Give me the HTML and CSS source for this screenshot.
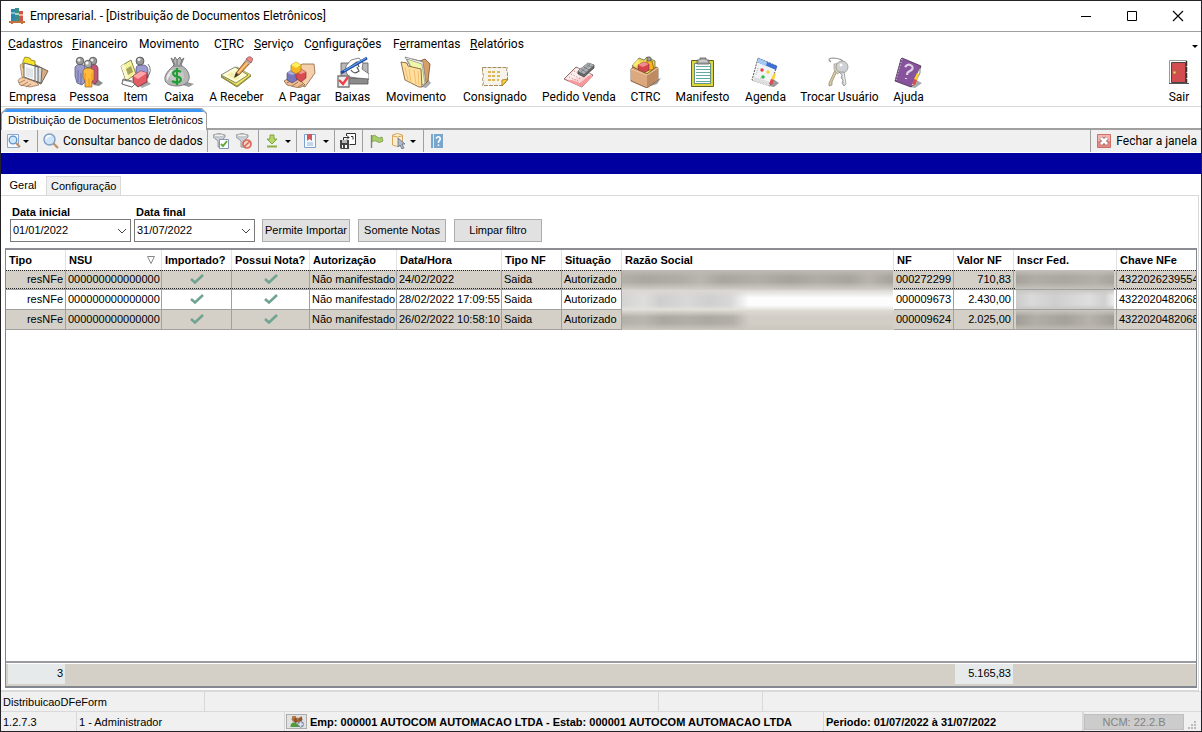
FILE: index.html
```html
<!DOCTYPE html>
<html lang="pt-BR">
<head>
<meta charset="utf-8">
<title>Empresarial</title>
<link rel="stylesheet" href="styles.css">
</head>
<body>
<div class="window">
  <header class="titlebar">
    <svg class="app-icon" viewBox="0 0 16 16"><rect x="2" y="1" width="4" height="12" fill="#2f86ad"/><rect x="2" y="4" width="4" height="2" fill="#7fc0cf"/><rect x="6" y="0" width="4" height="13" fill="#3b8f86"/><rect x="6" y="5" width="4" height="2" fill="#a9d6bd"/><rect x="10" y="3" width="4" height="10" fill="#d2554a"/><rect x="10" y="6" width="4" height="2" fill="#efb09a"/><path d="M0 13h16v2h-2v1h-2v-1H4v1H2v-1H0z" fill="#c4713c"/></svg>
    <h1>Empresarial. - [Distribuição de Documentos Eletrônicos]</h1>
    <div class="caption-buttons">
      <button type="button" aria-label="Minimizar"><svg viewBox="0 0 12 12"><path d="M1 6.500h10" stroke="#000"/></svg></button>
      <button type="button" aria-label="Maximizar"><svg viewBox="0 0 12 12"><path d="M1.500 1.500h9v9h-9z" fill="none" stroke="#000"/></svg></button>
      <button type="button" aria-label="Fechar"><svg viewBox="0 0 12 12"><path d="M1 1l10 10M11 1L1 11" stroke="#000" stroke-width="1.100"/></svg></button>
    </div>
  </header>

  <nav class="menubar">
    <a href="#"><u>C</u>adastros</a><a href="#"><u>F</u>inanceiro</a><a href="#">Movimento</a><a href="#">C<u>T</u>RC</a><a href="#"><u>S</u>erviço</a><a href="#">C<u>o</u>nfigurações</a><a href="#">F<u>e</u>rramentas</a><a href="#"><u>R</u>elatórios</a>
    <i class="caret"></i>
  </nav>

  <div class="launcher">
    <div class="launcher-items">
      <button type="button"><svg viewBox="0 0 32 32"><path d="M15 7l16 8-7 13-8-3z" fill="#d9ad80" stroke="#5b4737" stroke-width=".8"/><path d="M3 9l3-2 3 2v14l-4-2z" fill="#f3c99d" stroke="#8b694d" stroke-width=".6"/><path d="M6 5l2-4 5 1 1 2 4 1v8L6 12z" fill="#f6e22c" stroke="#8a7d13" stroke-width=".8"/><path d="M14 9l11 3-1 15-9-3z" fill="#d7dde2" stroke="#555" stroke-width=".8"/><path d="M10 8l11 3v15l-10-3z" fill="#eef1f3" stroke="#444" stroke-width=".8"/><path d="M7 7l11 3v15L7 21z" fill="#fafafa" stroke="#4b4b4b" stroke-width=".8"/><path d="M9 11l7 2v9l-7-2z" fill="#dfe5e8"/><path d="M1 25c1-3 4-4 7-3l11 4 3 3-9 2-10-2z" fill="#f6cda8" stroke="#8b694d" stroke-width=".7"/><path d="M2 27l6-3M4 30l7-4M9 31l5-3" stroke="#9a6f51" stroke-width=".8"/></svg><span>Empresa</span></button>
      <button type="button"><svg viewBox="0 0 32 32"><path d="M20 29l4-6 6 4-4 3z" fill="#8d8d8d"/><path d="M18 10q5-4 7 2v12l-3 4-5-2z" fill="#c2557c" stroke="#633" stroke-width=".7"/><path d="M2 11q4-5 10-1v16l-3 3-5-2-2-7z" fill="#9b9ccc" stroke="#4a4a6e" stroke-width=".7"/><path d="M5 14v12M8 17v11" stroke="#6c6da6"/><circle cx="7" cy="5" r="3.800" fill="#999" stroke="#444" stroke-width=".7"/><circle cx="20" cy="5" r="3.800" fill="#999" stroke="#444" stroke-width=".7"/><path d="M10 14q5-4 11 0v10l-2 1v6h-7v-7l-2-2z" fill="#ffb93c" stroke="#8b5c16" stroke-width=".7"/><path d="M16 22v9M12 17v7M19 17v7" stroke="#e88b0d" stroke-width=".8"/><circle cx="15" cy="8" r="3.800" fill="#aaa" stroke="#444" stroke-width=".7"/><circle cx="6" cy="4" r="1.500" fill="#eee"/><circle cx="14" cy="7" r="1.500" fill="#fff"/><circle cx="19" cy="4" r="1.500" fill="#eee"/></svg><span>Pessoa</span></button>
      <button type="button"><svg viewBox="0 0 32 32"><path d="M19 29l8-4 4 3-9 4z" fill="#aaa"/><path d="M16 13q0-5 7-4 5 0 5 6v7l-12 1z" fill="#9b9bd0" stroke="#45456d" stroke-width=".7"/><circle cx="20" cy="5" r="4" fill="#999" stroke="#444" stroke-width=".7"/><circle cx="19" cy="3.500" r="1.500" fill="#eee"/><path d="M1 10L11 4l5 14-10 7z" fill="#f4f19b" stroke="#6e6e28" stroke-width=".8"/><path d="M1 10l3-2 5 14-3 2z" fill="#fbf8cf"/><path d="M6 13l5-3 2 6-5 3z" fill="#a7a45b"/><path d="M13 20l8-5 6 2v9l-9 5-5-4z" fill="#e35c66" stroke="#6b3035" stroke-width=".8"/><path d="M13 20l8-5 6 2-9 6z" fill="#ffa5a8"/><path d="M28 8q5 6-1 14M3 23l-1 5 10 3 3-4M3 23l9 2" fill="none" stroke="#555" stroke-width=".8"/><path d="M3 24l9 2 3 2-3 3-10-3z" fill="#fff" stroke="#555" stroke-width=".7"/></svg><span>Item</span></button>
      <button type="button"><svg viewBox="0 0 32 32"><path d="M20 29l4-3 7 2-5 3z" fill="#999"/><path d="M11 9L8 2l3 2 1-3 2 3 3-3 1 3 3-2-3 7 5 4c7 9 2 17-9 17-13 0-16-8-7-17z" fill="#b7b7b7" stroke="#666" stroke-width=".8"/><path d="M12 9l-2-5M14 9V4m3 5l2-5M10 10h9" stroke="#666" fill="none" stroke-width=".8"/><path d="M8 14q-6 6-4 11 4-9 9-11z" fill="#ececec"/><circle cx="14" cy="20" r="7" fill="#c8c8c8"/><path d="M18 16q-3-2-6-1-4 2 0 5l4 1q4 3 0 5-4 1-7-1M14 12v17" stroke="#229e35" stroke-width="2.200" fill="none"/></svg><span>Caixa</span></button>
      <button type="button"><svg viewBox="0 0 32 32"><path d="M0 21l15-9 15 8-14 11z" fill="#c2bc26" stroke="#66651b" stroke-width=".7"/><path d="M0 20l16-9 14 8-14 11z" fill="#f0ec58" stroke="#666" stroke-width=".6"/><path d="M0 19l14-8 13 8-12 8z" fill="#fffed2" stroke="#555" stroke-width=".7"/><path d="M6 19l5-3 8 5-4 3z" fill="#f4efac"/><path d="M13 22l2-6 3 3z" fill="#333"/><path d="M15 17L26 3l4 3-12 13z" fill="#e99a44" stroke="#6b4530" stroke-width=".8"/><path d="M17 17L28 5" stroke="#ffcc80" stroke-width="1.500"/><path d="M26 2q3-3 6 1l-2 4-5-4z" fill="#ef8585" stroke="#855" stroke-width=".7"/><path d="M24 4l5 4" stroke="#a8afb8" stroke-width="1.600"/></svg><span>A Receber</span></button>
      <button type="button"><svg viewBox="0 0 32 32"><path d="M8 17L18 8l12 0 1 9-10 14-6-3z" fill="#f5cfa9" stroke="#8b6546" stroke-width=".8"/><path d="M0 25l7-4 10 4 4 4-6 3-12-3z" fill="#efbd91" stroke="#7d5637" stroke-width=".7"/><path d="M3 27l5-3m0 6l6-4m0 5l5-3" stroke="#8d603e" stroke-width=".8"/><path d="M3 17l5-3 5 3v7l-5 3-5-3z" fill="#7776bd" stroke="#414174" stroke-width=".6"/><path d="M3 17l5 2 5-2-5-3z" fill="#aaaadf"/><path d="M12 16l5-3 5 3v6l-5 4-5-4z" fill="#d94b50" stroke="#752b2f" stroke-width=".6"/><path d="M12 16l5 2 5-2-5-3z" fill="#f49793"/><path d="M7 9l5-3 5 3v6l-5 3-5-3z" fill="#f6b71e" stroke="#8d6920" stroke-width=".6"/><path d="M7 9l5 3 5-3-5-3z" fill="#ffef5f"/></svg><span>A Pagar</span></button>
      <button type="button"><svg viewBox="0 0 32 32"><path d="M4 7h27v17H4z" fill="#b9b9b9" stroke="#555" stroke-width=".8"/><path d="M9 22h22v6H9z" fill="#8b8b8b" stroke="#555" stroke-width=".8"/><path d="M9 10l5-6 8-2 4 5-1 6 7 5v5l-12-1-7-1q-5-3-4-11z" fill="#fff" stroke="#555" stroke-width=".7"/><path d="M13 11l7-5 2 5m-8 3q3 5 8 1l-2-4" fill="none" stroke="#555" stroke-width="1.200"/><path d="M4 17L30 2" stroke="#22479d" stroke-width="2.600"/><path d="M7 15L29 2" stroke="#56a2f2" stroke-width="1.200"/><path d="M1 20h11v11H1z" fill="#eee" stroke="#777" stroke-width="1.400"/><path d="M2 24l4 4 5-7" stroke="#ee3e42" stroke-width="2.400" fill="none"/></svg><span>Baixas</span></button>
      <button type="button"><svg viewBox="0 0 32 32"><path d="M22 31l5-9 4 5-5 5z" fill="#aaa"/><path d="M12 3l8 2 5-2 5 5-2 17-6 6z" fill="#d79e67" stroke="#6f4d2c" stroke-width=".8"/><path d="M5 1l18 5 3 21-4 4z" fill="#fff" stroke="#777" stroke-width=".8"/><path d="M7 3l15 5 3 20-5 1z" fill="#eff7a8" stroke="#777" stroke-width=".6"/><path d="M1 6l6 1 1 3 13 3 1 18-3 0-14-7z" fill="#ffdf9d" stroke="#75512b" stroke-width=".8"/><path d="M5 11l3 13M9 13l2 14M14 14l2 14M18 15l1 14" stroke="#f2bd71"/></svg><span>Movimento</span></button>
      <button type="button"><svg viewBox="0 0 32 32"><path d="M3.500 11.500h25l-1 2 1 3v8l-5 5h-20l1-3-1-3 1-4-1-3z" fill="#f6f3ea" stroke="#a58c5a" stroke-dasharray="4 1"/><path d="M9 16h3m1 0h3m2 0h3M9 20h3m1 0h3m2 0h3M9 24h3m1 0h3m2 0h2" stroke="#d5a327" stroke-width="1.600"/><path d="M29 23l-6 7v-6z" fill="#ffd33e" stroke="#9c731d" stroke-width=".8"/></svg><span>Consignado</span></button>
      <button type="button"><svg viewBox="0 0 32 32"><path d="M1 23l12-12 17 8-11 12z" fill="#fbd9da" stroke="#6c4d4d" stroke-width=".8"/><path d="M4 25l21-6 5 1-11 11z" fill="#f6999d"/><path d="M3 22l11-10 14 6-11 9z" fill="#fff" opacity=".55"/><path d="M8 18l10 5m-7-8l10 5m-15 1l9 4" stroke="#bd7777" stroke-dasharray="1 2"/><path d="M15 15L25 7l6 2v3l-10 9-6-3z" fill="#666" stroke="#444" stroke-width=".7"/><path d="M15 15L25 7l6 2-10 9z" fill="#aeb2b7"/><path d="M18 13l5 3m-2-5l5 3m-2-5l5 2M18 16l9-8" stroke="#777" stroke-width=".8"/></svg><span>Pedido Venda</span></button>
      <button type="button"><svg viewBox="0 0 32 32"><path d="M17 31l7-6 7-3-4 6z" fill="#999"/><path d="M2 10l7-8 5 2 3-3 8 4v10L15 19z" fill="#e6d750" stroke="#555" stroke-width=".7"/><path d="M3 9l5-6 6 11z" fill="#ffe96b"/><path d="M17 4l5 1 2 9h-7z" fill="#ffb51e" stroke="#77541f" stroke-width=".7"/><circle cx="19" cy="3" r="2.200" fill="#999" stroke="#444" stroke-width=".6"/><path d="M8 9l6-3 5 2v6l-5 3-6-3z" fill="#d5434c" stroke="#733" stroke-width=".6"/><path d="M8 9l5 2 6-3-5-2z" fill="#f38b8c"/><path d="M1 13l2-2 14 7 9-7 2 1v12l-11 8-16-7z" fill="#d69c6d" stroke="#704f35" stroke-width=".8"/><path d="M1 13l16 6v12L1 24z" fill="#dca97e"/><path d="M17 19l11-7v12l-11 7z" fill="#bd8a62"/><path d="M1 13l16 6 11-7" stroke="#f8d5ac" fill="none" stroke-width=".8"/></svg><span>CTRC</span></button>
      <button type="button"><svg viewBox="0 0 32 32"><path d="M4.500 4.500h22v26h-22z" fill="#dcd63f" stroke="#646421"/><path d="M7.500 7.500h16v20h-16z" fill="#fff" stroke="#4b7a78" stroke-width=".8"/><path d="M9 10.500h14M9 13.500h14M9 16.500h14M9 19.500h14M9 22.500h14M9 25.500h14" stroke="#61aaa8"/><path d="M10 4h3V2h6v2h3v4H10z" fill="#a9a9a9" stroke="#555" stroke-width=".8"/><path d="M12 5h8" stroke="#e8e8e8"/></svg><span>Manifesto</span></button>
      <button type="button"><svg viewBox="0 0 32 32"><path d="M19 30l4-7 6 4-5 4z" fill="#999"/><path d="M8 2l19 8-7 20L2 24z" fill="#f2f3f5" stroke="#4c4c4c" stroke-dasharray="2 1" stroke-width=".9"/><path d="M8 2l19 8-1 4L7 6z" fill="#3e6fd4"/><path d="M8 2l9 4-1 4-9-4z" fill="#a5cbf3"/><path d="M4 21l16 5-1 4-15-5z" fill="#dedede"/><circle cx="12" cy="14" r="1.700" fill="#e93945"/><circle cx="18" cy="16" r="1.700" fill="#ead92f"/><circle cx="13" cy="21" r="1.700" fill="#27be48"/><path d="M8 12l-2 7m4 3l4 1" stroke="#b7bac5" stroke-dasharray="1 1"/><path d="M24 17l2 1-2 6-3-1z" fill="#ffd22e"/><path d="M21 23l3 1-2 5-3-1z" fill="#df4b50"/></svg><span>Agenda</span></button>
      <button type="button"><svg viewBox="0 0 32 32"><path d="M7 6q-5-4 3-4 10 1 9 5" stroke="#999" stroke-width="1.200" fill="none"/><path d="M13 15l-5 11 0 3-3 1 0-3 7-15z" fill="#d8cba8" stroke="#91845f" stroke-width=".7"/><path d="M10 8l7-1 1 8-5 3-3-5z" fill="#ddd4b8" stroke="#999" stroke-width=".7"/><circle cx="18" cy="11" r="6" fill="#ced1d3" stroke="#888" stroke-width=".7"/><path d="M15 16h5l2 12-2 2-2-3 1-3-2-2 1-3z" fill="#c6cacc" stroke="#888" stroke-width=".7"/><path d="M19 17l2 11" stroke="#f2f2f2"/><circle cx="17" cy="9" r="1.500" fill="#fff"/></svg><span>Trocar Usuário</span></button>
      <button type="button"><svg viewBox="0 0 32 32"><path d="M17 31l6-7 6 3-7 5z" fill="#aaa"/><path d="M9 2l19 8-8 19-2 2L2 25 8 3z" fill="#87539c" stroke="#422b4b" stroke-width=".8"/><path d="M9 3L3 24" stroke="#e8dfe9" stroke-dasharray="1 2"/><path d="M12 11q3-4 7-1 2 3-2 5-3 1-3 4m-1 3v1" stroke="#ded2e6" stroke-width="2.100" fill="none"/><path d="M27 11l0 6-6 12-3 1z" fill="#f3f3f3" stroke="#555" stroke-width=".7"/><path d="M24 17l2 1-2 6-3-1z" fill="#ffcf29"/><path d="M21 23l3 1-2 5-3-1z" fill="#df4b50"/></svg><span>Ajuda</span></button>
    </div>
    <button class="exit" type="button"><svg viewBox="0 0 32 32"><path d="M6.500 27V4.500h17V27" fill="#fff" stroke="#999"/><path d="M8.500 6.500h14v20h-14z" fill="#d24c50" stroke="#444"/><path d="M6 27.500h20" stroke="#555"/><path d="M23.500 5v22" stroke="#333" stroke-dasharray="5 1" stroke-width="1.500"/><circle cx="11.500" cy="16.500" r="1.400" fill="#e5dc57" stroke="#684" stroke-width=".5"/></svg><span>Sair</span></button>
  </div>

  <div class="doc-tabs"><div class="doc-tab"><span>Distribuição de Documentos Eletrônicos</span></div></div>

  <div class="toolbar">
    <button class="tool drop first" type="button" aria-label="Visualizar"><svg viewBox="0 0 16 16"><path d="M1.500 1.500h11v13h-11z" fill="#f6f9ff" stroke="#8aa8cf"/><circle cx="7" cy="7" r="3.800" fill="#cfe7fa" stroke="#5f93c8" stroke-width="1.300"/><path d="M10 10l4 4" stroke="#c58f64" stroke-width="2.200"/></svg><i class="caret"></i></button>
    <button class="tool query" type="button"><svg viewBox="0 0 16 16"><circle cx="6.500" cy="6.500" r="5.500" fill="#cfe4f8" stroke="#7d9dc4" stroke-width="1.400"/><path d="M3 6q1-4 5-3" fill="none" stroke="#fff" stroke-width="1.500"/><path d="M10.500 10.500l4.500 4.500" stroke="#c5936b" stroke-width="2.400"/></svg><span>Consultar banco de dados</span></button>
    <div class="tool pair">
      <button type="button" aria-label="Aplicar filtro"><svg viewBox="0 0 16 16"><path d="M0 2q6-3 12 0v2L8 8v6H5V8L0 4z" fill="#c9ced2" stroke="#848b91" stroke-width=".8"/><ellipse cx="6" cy="2.500" rx="5" ry="1.300" fill="#f2f2f2" stroke="#9aa0a5" stroke-width=".5"/><path d="M6.500 6.500h9v9h-9z" fill="#fff" stroke="#8396b5"/><path d="M8 11l2 2 4-5" stroke="#63a83a" stroke-width="2" fill="none"/></svg></button>
      <button type="button" aria-label="Remover filtro"><svg viewBox="0 0 16 16"><path d="M0 2q6-3 12 0v2L8 8v6H5V8L0 4z" fill="#c9ced2" stroke="#848b91" stroke-width=".8"/><ellipse cx="6" cy="2.500" rx="5" ry="1.300" fill="#f2f2f2" stroke="#9aa0a5" stroke-width=".5"/><circle cx="11" cy="11" r="4" fill="#f4d4cd" stroke="#d76958" stroke-width="1.700"/><path d="M8 14l6-6" stroke="#d76958" stroke-width="1.600"/></svg></button>
    </div>
    <button class="tool drop" type="button" aria-label="Baixar"><svg viewBox="0 0 16 16"><path d="M6 2h4v4h3l-5 5-5-5h3z" fill="#b5d66a" stroke="#7ea53a"/><path d="M3 13.500h10" stroke="#8ab044" stroke-width="2"/></svg><i class="caret"></i></button>
    <button class="tool drop" type="button" aria-label="Relatórios"><svg viewBox="0 0 16 16"><path d="M2.500 1.500h11v13h-11z" fill="#f4f9ff" stroke="#78a2d4"/><path d="M5 1h5v7L7.500 6 5 8z" fill="#cf5858"/><path d="M5 10h6M5 12h6" stroke="#91afd4"/></svg><i class="caret"></i></button>
    <button class="tool copy" type="button" aria-label="Salvar layout"><svg viewBox="0 0 16 16"><path d="M6.500 3V.500h9v11h-6" fill="#fff" stroke="#333"/><path d="M3.500 7V4.500H9m-2-2l2 2-2 2m6 0v-3h-2" fill="none" stroke="#333"/><path d="M0 7h9v9H1l-1-1z" fill="#444"/><path d="M2 7h5v3H2z" fill="#bbb"/><path d="M2 12h5v3H2z" fill="#fff"/><path d="M3 12h2v3H3z" fill="#444"/></svg></button>
    <div class="tool actions">
      <button type="button" aria-label="Marcar"><svg viewBox="0 0 16 16"><path d="M2.500 2v13" stroke="#8c8171" stroke-width="1.400"/><path d="M3 3q3-2 5 1 2 2 5 0l1 4q-4 3-7 0-2-1-4 1z" fill="#a8cc6c" stroke="#759b42" stroke-width=".8"/></svg></button>
      <button class="with-caret" type="button" aria-label="Selecionar dados"><svg viewBox="0 0 16 16"><path d="M1.500 2v10q5 3 10 0V2q-5-3-10 0z" fill="#ffedcb" stroke="#d6a45d"/><path d="M2 3q4 2 9 0" stroke="#d6a45d" fill="none"/><path d="M7 5v9l2-2 2 4 2-1-2-4h3z" fill="#acb8ca" stroke="#62728a" stroke-width=".8"/></svg><i class="caret"></i></button>
    </div>
    <button class="tool help" type="button" aria-label="Ajuda"><svg viewBox="0 0 16 16"><path d="M2 1h12v14H2z" fill="#78a6cd"/><path d="M4.500 1v14" stroke="#d8eafa"/><path d="M7 5.500q2-3 4-1 1 2-1.500 4v1.500m0 1.500v1.500" stroke="#fff" stroke-width="1.500" fill="none"/></svg></button>
    <button class="tool close-page" type="button"><svg viewBox="0 0 16 16"><path d="M1.500 1.500h13v13h-13z" fill="#e08984" stroke="#cf6f6a"/><path d="M2 2h12v6H2z" fill="#efb5b1"/><path d="M5 5l6 6M11 5l-6 6" stroke="#9a6262" stroke-width="4.400"/><path d="M5 5l6 6M11 5l-6 6" stroke="#fff" stroke-width="2.800"/></svg><span>Fechar a janela</span></button>
  </div>

  <div class="band"></div>

  <main>
    <div class="page-tabs"><button class="active" type="button">Geral</button><button type="button">Configuração</button></div>
    <section class="page">
      <form class="filters">
        <div class="field"><label for="start">Data inicial</label><div class="combo"><input id="start" value="01/01/2022"><button type="button" aria-label="Abrir calendário inicial"><svg viewBox="0 0 10 6"><path d="M1 1l4 4 4-4" fill="none" stroke="#444"/></svg></button></div></div>
        <div class="field"><label for="end">Data final</label><div class="combo"><input id="end" value="31/07/2022"><button type="button" aria-label="Abrir calendário final"><svg viewBox="0 0 10 6"><path d="M1 1l4 4 4-4" fill="none" stroke="#444"/></svg></button></div></div>
        <div class="actions-row"><button type="button">Permite Importar</button><button type="button">Somente Notas</button><button type="button">Limpar filtro</button></div>
      </form>

      <div class="grid">
        <div class="grid-body">
          <table>
            <colgroup><col class="w60"><col class="w96"><col class="w70"><col class="w78"><col class="w87"><col class="w105"><col class="w60"><col class="w60"><col class="w272"><col class="w60"><col class="w60"><col class="w103"><col class="w96"></colgroup>
            <thead><tr><th>Tipo</th><th><span class="sorted">NSU<svg viewBox="0 0 8 8"><path d="M.500.500h7l-3.500 7z" fill="none" stroke="#888"/></svg></span></th><th>Importado?</th><th>Possui Nota?</th><th>Autorização</th><th>Data/Hora</th><th>Tipo NF</th><th>Situação</th><th>Razão Social</th><th>NF</th><th>Valor NF</th><th>Inscr Fed.</th><th>Chave NFe</th></tr></thead>
            <tbody>
              <tr class="alt focus"><td class="num">resNFe</td><td>000000000000000</td><td class="mid"><svg viewBox="0 0 14 10"><path d="M1 5l4 3.500L13 1" fill="none" stroke="#70a491" stroke-width="2.600"/></svg></td><td class="mid"><svg viewBox="0 0 14 10"><path d="M1 5l4 3.500L13 1" fill="none" stroke="#70a491" stroke-width="2.600"/></svg></td><td>Não manifestado</td><td>24/02/2022</td><td>Saida</td><td>Autorizado</td><td class="hidden name"><div class="smudge s1"></div></td><td>000272299</td><td class="num">710,83</td><td class="hidden id"><div class="smudge i1"></div></td><td>4322026239554</td></tr>
              <tr><td class="num">resNFe</td><td>000000000000000</td><td class="mid"><svg viewBox="0 0 14 10"><path d="M1 5l4 3.500L13 1" fill="none" stroke="#70a491" stroke-width="2.600"/></svg></td><td class="mid"><svg viewBox="0 0 14 10"><path d="M1 5l4 3.500L13 1" fill="none" stroke="#70a491" stroke-width="2.600"/></svg></td><td>Não manifestado</td><td>28/02/2022 17:09:55</td><td>Saida</td><td>Autorizado</td><td class="hidden name"><div class="smudge s2"></div></td><td>000009673</td><td class="num">2.430,00</td><td class="hidden id"><div class="smudge i2"></div></td><td>4322020482068</td></tr>
              <tr class="alt"><td class="num">resNFe</td><td>000000000000000</td><td class="mid"><svg viewBox="0 0 14 10"><path d="M1 5l4 3.500L13 1" fill="none" stroke="#70a491" stroke-width="2.600"/></svg></td><td class="mid"><svg viewBox="0 0 14 10"><path d="M1 5l4 3.500L13 1" fill="none" stroke="#70a491" stroke-width="2.600"/></svg></td><td>Não manifestado</td><td>26/02/2022 10:58:10</td><td>Saida</td><td>Autorizado</td><td class="hidden name"><div class="smudge s3"></div></td><td>000009624</td><td class="num">2.025,00</td><td class="hidden id"><div class="smudge i3"></div></td><td>4322020482068</td></tr>
            </tbody>
          </table>
        </div>
        <div class="totals"><output class="count">3</output><output class="sum">5.165,83</output></div>
      </div>
    </section>
  </main>

  <footer>
    <div class="status forms"><span>DistribuicaoDFeForm</span><span></span><span></span><span></span></div>
    <div class="status session">
      <span>1.2.7.3</span><span>1 - Administrador</span>
      <button class="users" type="button" aria-label="Trocar estabelecimento"><svg viewBox="0 0 16 14"><path d="M3 1h4v2h3l3-2v5l-3 2H5L2 5z" fill="#b77844"/><path d="M4 4l3-1 2 4-3 2zM9 5l4-3 1 3-3 3z" fill="#8b552f"/><path d="M1 12q1-6 6-3l3 1v3H1z" fill="#4d9d3f"/><circle cx="12" cy="10" r="3" fill="#acb9d2" stroke="#6b7893"/><path d="M12 7v6M9 10h6" stroke="#fff" stroke-width=".7"/></svg></button>
      <strong>Emp: 000001 AUTOCOM AUTOMACAO LTDA - Estab: 000001 AUTOCOM AUTOMACAO LTDA</strong><strong>Periodo: 01/07/2022 à 31/07/2022</strong>
      <span class="ncm"><button type="button" disabled>NCM: 22.2.B</button><svg viewBox="0 0 9 9"><path d="M6 0h2v2H6zM3 3h2v2H3zM6 3h2v2H6zM0 6h2v2H0zM3 6h2v2H3zM6 6h2v2H6z" fill="#bbb"/></svg></span>
    </div>
  </footer>
</div>
</body>
</html>
```

FILE: styles.css
```css
* { box-sizing: border-box; }
body { margin: 0; font: 11px/14px "Liberation Sans", Arial, sans-serif; color: #000; }
button { border: 0; padding: 0; margin: 0; background: none; font: inherit; color: inherit; }
svg { display: block; flex: none; }

.window { display: flex; flex-direction: column; height: 100vh; border: 1px solid #242226; background: #fff; overflow: hidden; }
.caret { border: 3px solid transparent; border-top-color: #000; border-bottom: 0; }
.titlebar, .menubar, .launcher, .toolbar { font: 12px/16px Roboto, sans-serif; }

.titlebar { display: flex; align-items: center; height: 31px; padding-left: 8px; border-bottom: 1px solid #a0a0a0; }
.app-icon { width: 16px; height: 16px; margin-right: 5px; }
.titlebar h1 { margin: 0; font: inherit; flex: 1; }
.caption-buttons { display: flex; }
.caption-buttons button { width: 46px; height: 30px; display: grid; place-items: center; }
.caption-buttons svg { width: 12px; height: 12px; }

.menubar { display: grid; grid-template-columns: 64px 67px 75px 40px 50px 89px 77px 1fr auto; align-items: center; height: 22px; padding: 1px 3px 0 7px; }
.menubar a { color: inherit; text-decoration: none; white-space: nowrap; }
.menubar .caret { margin-top: 6px; }

.launcher { display: flex; justify-content: space-between; height: 53px; padding: 2px 2px 0 1px; border-bottom: 1px solid #d9d9d9; }
.launcher-items { display: grid; grid-template-columns: 61px 52px 41px 46px 69px 57px 49px 78px 80px 88px 45px 69px 57px 91px 47px; }
.launcher button { display: flex; flex-direction: column; align-items: center; gap: 1px; white-space: nowrap; }
.launcher svg { width: 32px; height: 32px; }
.exit { width: 40px; }

.doc-tabs { height: 23px; border-bottom: 2px solid #a0a0a0; }
.doc-tab { width: 206px; height: 22px; margin-top: 1px; padding: 1px; background: #a0a0a0; clip-path: polygon(5px 0, 201px 0, 100% 5px, 100% 100%, 0 100%, 0 5px); }
.doc-tab span { display: block; height: 21px; padding: 0 0 0 6px; border-top: 3px solid #3c96f5; background: #fff; clip-path: polygon(5px 0, 199px 0, 100% 5px, 100% 100%, 0 100%, 0 5px); line-height: 16px; }

.toolbar { display: flex; height: 23px; background: #f0f0f0; border-bottom: 1px solid #fff; }
.toolbar svg { width: 16px; height: 16px; }
.tool { display: flex; align-items: center; border-right: 1px solid #a0a0a0; white-space: nowrap; }
.tool button { display: flex; align-items: center; }
.drop { width: 38px; padding-left: 5px; gap: 5px; }
.first { width: 37px; gap: 1px; }
.query { width: 170px; padding-left: 5px; gap: 4px; }
.pair { width: 51px; padding-left: 5px; gap: 7px; }
.copy { width: 28px; padding-left: 5px; }
.actions { width: 61px; padding-left: 6px; gap: 6px; }
.with-caret { gap: 3px; }
.help { padding-left: 5px; border: 0; }
.close-page { margin-left: auto; padding: 0 4px 0 5px; gap: 4px; border-right: 0; border-left: 1px solid #a0a0a0; }

.band { height: 21px; background: #0000a0; }

main { flex: 1; display: flex; flex-direction: column; min-height: 0; }
.page-tabs { display: flex; height: 21px; padding-top: 2px; }
.page-tabs button { height: 19px; padding: 0 4px; border: 1px solid #d9d9d9; border-bottom: 0; background: #f0f0f0; }
.page-tabs .active { width: 45px; padding: 0 8px 3px 7px; background: #fff; border-color: #fff; }
.page { flex: 1; display: flex; flex-direction: column; min-height: 0; margin-right: 2px; padding: 9px 1px 2px 4px; border: 1px solid #d9d9d9; border-left: 0; }

.filters { display: flex; align-items: flex-end; padding: 0 0 6px 5px; gap: 3px; }
.field { width: 121px; }
.field label { display: block; padding-left: 2px; font-weight: bold; }
.combo { display: flex; align-items: center; height: 23px; border: 1px solid #7a7a7a; background: #fff; }
.combo input { flex: 1; min-width: 0; border: 0; padding: 0 2px 2px; font: inherit; background: none; }
.combo button { width: 16px; display: grid; place-items: center; }
.combo svg { width: 10px; height: 6px; }
.actions-row { display: flex; gap: 8px; padding-left: 4px; }
.actions-row button { width: 88px; height: 23px; padding-bottom: 1px; border: 1px solid #adadad; background: #e1e1e1; }

.grid { flex: 1; display: flex; flex-direction: column; min-height: 0; border: 1px solid #828790; border-top: 2px solid #8c8c94; border-bottom-width: 2px; }
.grid-body { flex: 1; min-height: 0; overflow: hidden; }
table { width: 100%; min-width: 1206px; table-layout: fixed; border-collapse: separate; border-spacing: 0; }
.w60 { width: 60px; } .w70 { width: 70px; } .w78 { width: 78px; } .w87 { width: 87px; } .w96 { width: 96px; } .w103 { width: 103px; } .w105 { width: 105px; } .w272 { width: 272px; }
th, td { height: 20px; padding: 0 2px; text-align: left; white-space: nowrap; overflow: hidden; border-right: 1px solid #a0a0a0; }
th { padding: 0 3px; border-right-color: #e2e2e2; }
td { padding-bottom: 2px; border-bottom: 1px solid #a0a0a0; }
.alt td { background: #d4d0c8; }
.focus td { background-image: repeating-linear-gradient(90deg, #222 0 1px, transparent 1px 2px), repeating-linear-gradient(90deg, #222 0 1px, transparent 1px 2px); background-size: 100% 1px; background-position: 0 0, 0 100%; background-repeat: no-repeat; }
td.num { text-align: right; }
.mid svg { width: 14px; height: 10px; margin: 0 auto; }
.sorted { display: flex; justify-content: space-between; align-items: center; padding-right: 3px; }
.sorted svg { width: 8px; height: 8px; }
td.hidden { padding: 0; }
td.name { border: 0; }
.name .smudge { height: 20px; margin-right: 1px; }
.id .smudge { height: 19px; margin: 0 2px; }
.s1 { background: linear-gradient(#bfbbb4, transparent 35%, transparent 60%, #d2cfc9), linear-gradient(90deg, #b2afa8, #aaa7a0 8%, #b0ada6 22%, #b9b6af 29%, #a9a69f 37%, #b1aea7 50%, #a6a39c 62%, #b0ada6 72%, #a8a59e 84%, #b8b4ad 91%, #a5a29b); }
.s2 { background: linear-gradient(#dad8d3, transparent 40%, transparent 75%, #e3e1dc), linear-gradient(90deg, #d3d3d2, #dededd 8%, #cecece 14%, #d8d8d8 24%, #cfcfcf 32%, #d7d7d7 40%, #fdfdfd 47%); }
.s3 { background: linear-gradient(#dedbd5, transparent 35%, transparent 65%, #cbc7bf), linear-gradient(90deg, #b3b0a9, #b9b6af 8%, #aba8a2 15%, #b1aea7 24%, #aca9a2 32%, #b4b0a9 41%, #d2cec6 47%); }
.i1 { background: linear-gradient(#c4c0b9, transparent 35%, transparent 65%, #c4c2bd), linear-gradient(90deg, #a6a39c, #b0ada6 20%, #aaa7a0 50%, #b3b0a9 80%, #a7a49d); }
.i2 { background: linear-gradient(#c9c7c3, transparent 30%, transparent 75%, #cbc9c5), linear-gradient(90deg, #ccc, #dadada 15%, #cfcfcf 40%, #dedede 75%, #d0d0d0 90%, #eee); }
.i3 { background: linear-gradient(#c9c6c0, transparent 35%, transparent 70%, #beb9b1), linear-gradient(90deg, #a19e97, #b1aea7 20%, #a5a29b 50%, #b7b3ac 75%, #a19e97); }

.totals { display: flex; height: 25px; padding: 1px 2px; border-top: 2px solid #9a9aa0; background: #d4d0c8; box-shadow: inset 0 1px #fff; }
.totals output { height: 20px; padding: 2px 2px; text-align: right; background: #e6eaea; }
.count { width: 57px; margin-right: 890px; }
.sum { width: 58px; }

footer { background: #f0f0f0; }
.status { display: grid; height: 20px; border-top: 1px solid #d9d9d9; }
.status > * { padding: 3px 2px 0; border-right: 1px solid #d9d9d9; white-space: nowrap; line-height: 15px; }
.status > :last-child { border-right: 0; }
.forms { grid-template-columns: 204px 454px 104px 1fr; }
.session { grid-template-columns: 76px 208px 23px 516px 1fr 118px; }
.session > .users { display: grid; place-items: center; margin: 2px 1px; padding: 0; border: 1px solid #adadad; background: #e1e1e1; }
.users svg { width: 16px; height: 13px; }
.session > .ncm { display: flex; align-items: flex-end; gap: 4px; padding: 2px 0 1px; border-left: 1px solid #d9d9d9; }
.ncm button { width: 100px; height: 16px; border: 1px solid #bfbfbf; background: #ccc; color: #838383; }
.ncm svg { width: 9px; height: 9px; }
```
